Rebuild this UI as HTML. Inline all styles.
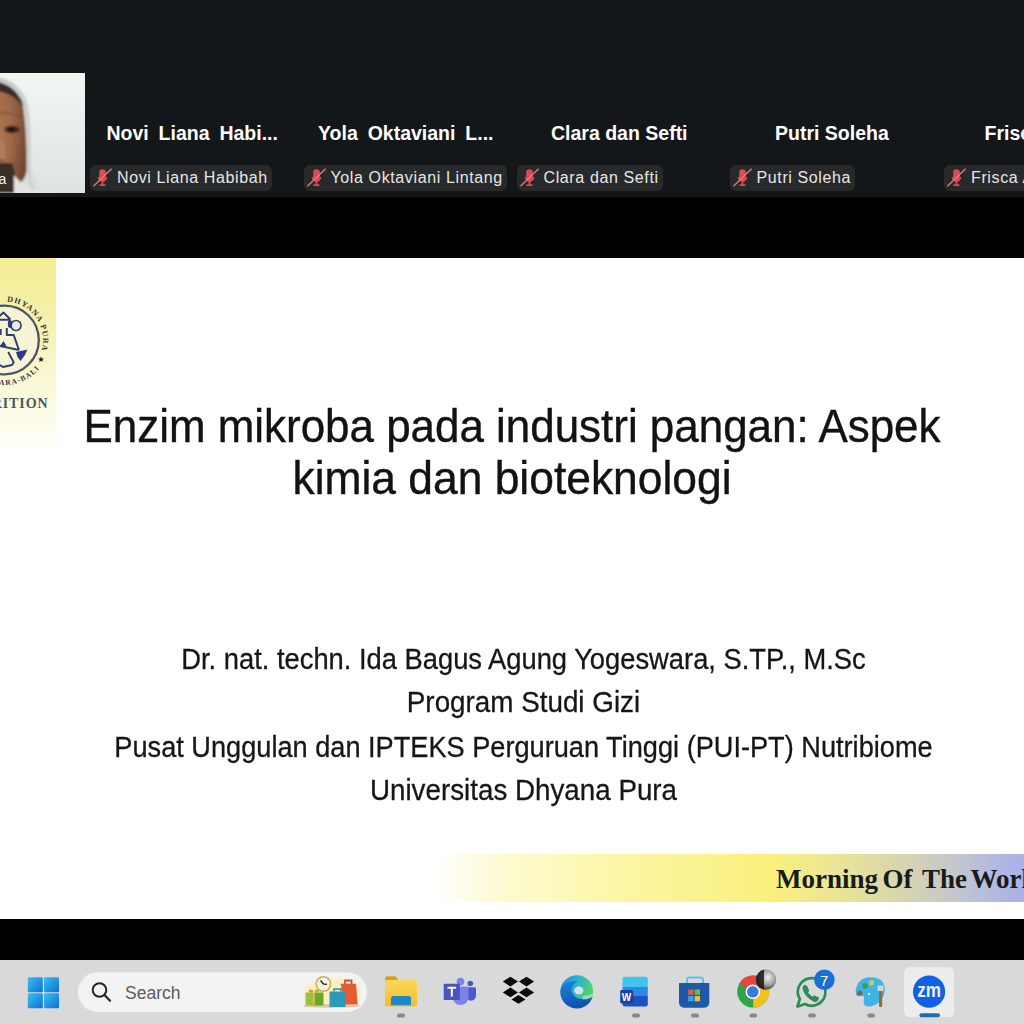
<!DOCTYPE html>
<html><head><meta charset="utf-8">
<style>
*{margin:0;padding:0;box-sizing:border-box}
html,body{width:1024px;height:1024px;overflow:hidden;background:#000;font-family:"Liberation Sans",sans-serif}
.abs{position:absolute}
#top{position:absolute;left:0;top:0;width:1024px;height:197px;background:#14171a}
#gap1{position:absolute;left:0;top:197px;width:1024px;height:61px;background:#000}
#slide{position:absolute;left:0;top:258px;width:1024px;height:661px;background:#fff;overflow:hidden}
#gap2{position:absolute;left:0;top:919px;width:1024px;height:41px;background:#000}
#taskbar{position:absolute;left:0;top:960px;width:1024px;height:64px;background:#d9d9d9}
.name{position:absolute;top:122px;color:#fff;font-weight:bold;font-size:19.5px;white-space:nowrap}
.tag{position:absolute;top:164.5px;height:26px;background:#28292b;border-radius:6px;color:#e6e6e6;font-size:16px;letter-spacing:0.62px;white-space:nowrap;padding-left:27px;padding-right:4px;line-height:26px}
.tag svg{position:absolute;left:4px;top:4px}
.title{position:absolute;left:0;width:1024px;text-align:center;font-size:46px;color:#121212;-webkit-text-stroke:0.4px #121212;white-space:nowrap}
.sub{position:absolute;left:0;width:1047px;text-align:center;font-size:29px;line-height:29px;color:#161616;-webkit-text-stroke:0.3px #161616;white-space:nowrap}
.mw{position:absolute;top:606px;font-family:'Liberation Serif',serif;font-weight:bold;font-size:27px;line-height:30px;color:#1a1a1a;white-space:nowrap}
</style></head><body>
<div id="top"></div>
<div id="video" class="abs" style="left:0;top:73px;width:85px;height:120px;background:linear-gradient(to bottom,#f2f6f3,#e6ebea 60%,#dde2e3);overflow:hidden">
<svg width="85" height="120" viewBox="0 0 85 120" style="position:absolute;left:0;top:0">
<defs><radialGradient id="sk" cx="0.1" cy="0.4" r="0.95"><stop offset="0" stop-color="#b47a54"/><stop offset="0.55" stop-color="#9e6646"/><stop offset="1" stop-color="#6e4430"/></radialGradient>
<linearGradient id="hj" x1="0" y1="0" x2="1" y2="0"><stop offset="0" stop-color="#cacaca"/><stop offset="1" stop-color="#e4e6e6"/></linearGradient>
<filter id="fb" x="-20%" y="-20%" width="140%" height="140%"><feGaussianBlur stdDeviation="0.9"/></filter></defs>
<g filter="url(#fb)">
<path d="M-10 3 C6 3 22 12 28 30 C32 48 31 72 32 96 C34 108 42 114 52 124 L-10 124 Z" fill="url(#hj)"/>
<path d="M-10 5 C8 6 20 14 25 30 C29 47 29 72 29 96 C29 108 31 115 36 122" fill="none" stroke="#c2c2c2" stroke-width="1.4"/>
<path d="M-10 13 C10 15 19 22 23 34 C26 52 27 80 26.5 98 C25.5 106 21 110 15 114 L-10 114 Z" fill="url(#sk)"/>
<path d="M-10 8 C6 9 15 15 22 28 L23.5 34 C17 25 9 19 -10 17 Z" fill="#3a2a26"/>
<path d="M-10 41 C2 39 12 40 21 44" fill="none" stroke="#7a4c38" stroke-width="2.6" opacity="0.55"/>
<ellipse cx="12" cy="56.5" rx="7.8" ry="3.8" fill="#4a2e26"/>
<ellipse cx="11.5" cy="56.5" rx="3.8" ry="2.8" fill="#24160f"/>
<path d="M-10 66 L3 68 C6 74 7 82 5 88 L-10 88 Z" fill="#c49070" opacity="0.45"/>
<path d="M-10 84 C-2 86 3 86 5 88 L-10 90 Z" fill="#6a4030" opacity="0.7"/>
<path d="M-10 90 L12 90 C16 98 16 110 14 120 L-10 120 Z" fill="#3a2e2b"/>
<path d="M14 102 C20 110 30 116 50 124 L14 124 Z" fill="#e2e2e2"/>
</g>
<text x="-1.5" y="110.5" font-family="Liberation Sans" font-size="14" fill="#f0f0f0">a</text>
</svg></div>
<div class="name" style="left:106.4px;word-spacing:4.5px;">Novi Liana Habi...</div>
<div class="tag" style="left:90px"><svg width="26" height="26" viewBox="0 0 26 26" style="position:absolute;left:0;top:0"><rect x="9.2" y="4.3" width="6.6" height="11" rx="3.3" fill="#d84c58"/><path d="M8.6 12a3.9 3.9 0 0 0 7.8 0" fill="none" stroke="#d84c58" stroke-width="1.8"/><path d="M12.5 16v3.5M9.5 20.2h6" stroke="#d84c58" stroke-width="1.8"/><path d="M3.4 21.3L21.6 3.7" stroke="#e87880" stroke-width="1.3"/></svg>Novi Liana Habibah</div>
<div class="name" style="left:318px;word-spacing:4.5px;">Yola Oktaviani L...</div>
<div class="tag" style="left:303.5px"><svg width="26" height="26" viewBox="0 0 26 26" style="position:absolute;left:0;top:0"><rect x="9.2" y="4.3" width="6.6" height="11" rx="3.3" fill="#d84c58"/><path d="M8.6 12a3.9 3.9 0 0 0 7.8 0" fill="none" stroke="#d84c58" stroke-width="1.8"/><path d="M12.5 16v3.5M9.5 20.2h6" stroke="#d84c58" stroke-width="1.8"/><path d="M3.4 21.3L21.6 3.7" stroke="#e87880" stroke-width="1.3"/></svg>Yola Oktaviani Lintang</div>
<div class="name" style="left:551px;">Clara dan Sefti</div>
<div class="tag" style="left:516.5px"><svg width="26" height="26" viewBox="0 0 26 26" style="position:absolute;left:0;top:0"><rect x="9.2" y="4.3" width="6.6" height="11" rx="3.3" fill="#d84c58"/><path d="M8.6 12a3.9 3.9 0 0 0 7.8 0" fill="none" stroke="#d84c58" stroke-width="1.8"/><path d="M12.5 16v3.5M9.5 20.2h6" stroke="#d84c58" stroke-width="1.8"/><path d="M3.4 21.3L21.6 3.7" stroke="#e87880" stroke-width="1.3"/></svg>Clara dan Sefti</div>
<div class="name" style="left:775px;">Putri Soleha</div>
<div class="tag" style="left:729.5px"><svg width="26" height="26" viewBox="0 0 26 26" style="position:absolute;left:0;top:0"><rect x="9.2" y="4.3" width="6.6" height="11" rx="3.3" fill="#d84c58"/><path d="M8.6 12a3.9 3.9 0 0 0 7.8 0" fill="none" stroke="#d84c58" stroke-width="1.8"/><path d="M12.5 16v3.5M9.5 20.2h6" stroke="#d84c58" stroke-width="1.8"/><path d="M3.4 21.3L21.6 3.7" stroke="#e87880" stroke-width="1.3"/></svg>Putri Soleha</div>
<div class="name" style="left:984.5px;word-spacing:4.5px;">Frisca Ayu...</div>
<div class="tag" style="left:944px"><svg width="26" height="26" viewBox="0 0 26 26" style="position:absolute;left:0;top:0"><rect x="9.2" y="4.3" width="6.6" height="11" rx="3.3" fill="#d84c58"/><path d="M8.6 12a3.9 3.9 0 0 0 7.8 0" fill="none" stroke="#d84c58" stroke-width="1.8"/><path d="M12.5 16v3.5M9.5 20.2h6" stroke="#d84c58" stroke-width="1.8"/><path d="M3.4 21.3L21.6 3.7" stroke="#e87880" stroke-width="1.3"/></svg>Frisca Ayu Lestari</div>
<div id="gap1"></div>
<div id="slide">
<div class="abs" style="left:0;top:0;width:56px;height:200px;background:linear-gradient(to bottom,#f3ee96 0%,#f4f0a2 20%,#f7f3ba 42%,#faf8d2 60%,#fdfce8 78%,#ffffff 100%)"></div>
<svg class="abs" style="left:0;top:0" width="56" height="160" viewBox="0 0 56 160">
<defs>
<path id="arcTop" d="M-34 82 A38.5 38.5 0 1 1 43 82 A38.5 38.5 0 0 1 4.5 120.5"/>
<path id="arcBot" d="M-40.5 82 A45 45 0 0 0 49.5 82"/>
</defs>
<circle cx="4.5" cy="82" r="34.3" fill="#f6f4d4" stroke="#4b5662" stroke-width="2.3"/>
<text font-family="Liberation Serif" font-weight="bold" font-size="8" fill="#34383f"><textPath href="#arcTop" startOffset="63" textLength="68" lengthAdjust="spacing">DHYANA PURA</textPath></text>
<polygon points="41.00,98.30 41.76,100.45 44.04,100.51 42.24,101.90 42.88,104.09 41.00,102.80 39.12,104.09 39.76,101.90 37.96,100.51 40.24,100.45" fill="#1a1a1a"/>
<text font-family="Liberation Serif" font-weight="bold" font-size="7.5" fill="#34383f"><textPath href="#arcBot" startOffset="53" textLength="57" lengthAdjust="spacing">UTARA-BALI</textPath></text>
<path d="M-1 58.5 L3.4 54.5 L10.5 61.5 M0 61.7 L10 61.7 M6.8 70 V77 H13.7 L19 92 M0.7 71 V77 M0 88 L19 92 M8.2 94 L13.7 104.4 L12 107 L3 109 L0 107" fill="none" stroke="#34406a" stroke-width="2" stroke-linejoin="round"/>
<circle cx="16" cy="67.5" r="5" fill="#e8eef0" stroke="#3e4850" stroke-width="1.7"/>
<ellipse cx="10" cy="66" rx="2.2" ry="4" fill="#2e3a8a"/>
<path d="M0 88 L3.5 83 L6.5 88 Z M16 94 L23 92.5 L27.3 91.5 L25 97 L20.5 103 L17.5 99 Z" fill="#2e3a8a"/>
<text x="48.5" y="149.8" text-anchor="end" font-family="Liberation Serif" font-weight="bold" font-size="14" fill="#4e5460" letter-spacing="0.9">RITION</text>
</svg>
<div class="title" style="top:144.6px;line-height:46px;transform:scaleX(0.9548)">Enzim mikroba pada industri pangan: Aspek</div>
<div class="title" style="top:197.1px;line-height:46px;transform:scaleX(0.9646)">kimia dan bioteknologi</div>
<div class="sub" style="top:386.6px;transform:scaleX(0.942)">Dr. nat. techn. Ida Bagus Agung Yogeswara, S.TP., M.Sc</div>
<div class="sub" style="top:430.2px;transform:scaleX(0.9588)">Program Studi Gizi</div>
<div class="sub" style="top:474.6px;transform:scaleX(0.9366)">Pusat Unggulan dan IPTEKS Perguruan Tinggi (PUI-PT) Nutribiome</div>
<div class="sub" style="top:518.2px;transform:scaleX(0.9573)">Universitas Dhyana Pura</div>
<div class="abs" style="left:436px;top:595.5px;width:588px;height:48.5px;background:linear-gradient(to right,rgba(253,249,200,0) 0%,#fdfad0 12%,#fcf6a6 31%,#f9f07c 57%,#ebe596 68%,#d6d4b0 80%,#c0c4d4 90%,#a8b0e8 100%)"></div>
<div class="mw" style="left:776px">Morning</div><div class="mw" style="left:882.5px">Of</div><div class="mw" style="left:922px">The</div><div class="mw" style="left:970.5px">World</div>
</div>
<div id="gap2"></div>
<div id="taskbar">
<svg width="1024" height="64" viewBox="0 960 1024 64" style="position:absolute;left:0;top:0">
<defs>
<linearGradient id="win" x1="0" y1="0" x2="1" y2="1"><stop offset="0" stop-color="#3cc0f4"/><stop offset="1" stop-color="#0a6fd2"/></linearGradient>
<linearGradient id="fold" x1="0" y1="0" x2="0" y2="1"><stop offset="0" stop-color="#fbd85a"/><stop offset="1" stop-color="#f2bc2a"/></linearGradient>
<radialGradient id="glow" cx="0.5" cy="0.5" r="0.5"><stop offset="0" stop-color="#fbf2b8"/><stop offset="0.75" stop-color="#f8efc4"/><stop offset="1" stop-color="#f3f3f3" stop-opacity="0"/></radialGradient>
<linearGradient id="edge1" x1="0" y1="0.2" x2="1" y2="0.6"><stop offset="0" stop-color="#1c90e0"/><stop offset="0.45" stop-color="#2cb4d0"/><stop offset="1" stop-color="#5cd85a"/></linearGradient>
<linearGradient id="edge2" x1="0" y1="0" x2="0.3" y2="1"><stop offset="0" stop-color="#1a86dc"/><stop offset="1" stop-color="#1050b0"/></linearGradient>
<radialGradient id="avatar" cx="0.6" cy="0.4" r="0.6"><stop offset="0" stop-color="#f0f0f0"/><stop offset="0.6" stop-color="#a0a0a0"/><stop offset="1" stop-color="#404040"/></radialGradient>
</defs>
<!-- windows -->
<rect x="27.8" y="977.2" width="15" height="15" rx="1.2" fill="url(#win)"/>
<rect x="44" y="977.2" width="15" height="15" rx="1.2" fill="url(#win)"/>
<rect x="27.8" y="993.2" width="15" height="15" rx="1.2" fill="url(#win)"/>
<rect x="44" y="993.2" width="15" height="15" rx="1.2" fill="url(#win)"/>
<!-- search pill -->
<rect x="77.5" y="971.8" width="290" height="40.6" rx="20.3" fill="#f3f3f3" stroke="#d6d6d6" stroke-width="0.8"/>
<circle cx="99.5" cy="990" r="6.8" fill="none" stroke="#262626" stroke-width="2"/>
<path d="M104.5 995 L110 1000.8" stroke="#262626" stroke-width="2.2" stroke-linecap="round"/>
<text x="125" y="999" font-family="Liberation Sans" font-size="17.5" fill="#5c5c5c">Search</text>
<!-- shopping graphic -->
<ellipse cx="332" cy="992" rx="34" ry="16.5" fill="url(#glow)"/>
<path d="M303 1005.5 Q332 1003 360 1005 L358 1007 Q330 1008.5 304 1007 Z" fill="#c8a070" opacity="0.5"/>
<circle cx="323.4" cy="984" r="7.2" fill="#f6f2e2" stroke="#c8b068" stroke-width="1.6"/>
<path d="M323.4 984 L320.5 980.5 M323.4 984 L327 984.3" stroke="#222" stroke-width="1.3"/>
<rect x="305.5" y="992.5" width="9" height="13" fill="#9cc23a"/><rect x="314" y="992.5" width="9.5" height="13" fill="#6aa82c"/>
<rect x="313" y="992.5" width="2" height="13" fill="#e0c048" opacity="0.8"/>
<ellipse cx="311" cy="991" rx="2.5" ry="1.6" fill="#d0a040"/><ellipse cx="317" cy="991" rx="2.5" ry="1.6" fill="#c8b040"/>
<path d="M345 984 v-3.5 h6.5 v3.5" fill="none" stroke="#d84c28" stroke-width="1.8"/>
<path d="M340.5 983.8 L356 983.8 L357.7 1004.5 L345.5 1004.5 Z" fill="#e65c30"/>
<path d="M334 991.5 v-2.5 h7 v2.5" fill="none" stroke="#2a8eb0" stroke-width="1.6"/>
<rect x="329.5" y="991.5" width="16" height="15.5" fill="#2b9ab8"/>
<!-- folder -->
<path d="M385.2 978.5 Q385.2 976.3 387.5 976.3 L395 976.3 L398 979 L398 983.8 L385.2 983.8 Z" fill="#d6a21e"/>
<rect x="385" y="980" width="32" height="26.4" rx="1.5" fill="url(#fold)"/>
<path d="M391 1005.3 L391 998.5 Q391 996 393.5 996 L408.5 996 Q411 996 411 998.5 L411 1005.3 Z" fill="#1a88cc"/>
<!-- teams -->
<circle cx="460.5" cy="981.5" r="3.8" fill="#7b83eb"/>
<circle cx="470.3" cy="983.5" r="2.8" fill="#5059c9"/>
<path d="M465.5 987.2 h9 a1.5 1.5 0 0 1 1.5 1.5 v7 a5 5 0 0 1 -10 0 z" fill="#5059c9"/>
<path d="M453 986.5 h14 a1.5 1.5 0 0 1 1.5 1.5 v9 a8 8 0 0 1 -16 0 z" fill="#7b83eb"/>
<rect x="443.7" y="983.8" width="16.2" height="16.2" rx="1" fill="#4b53bc"/>
<path d="M447.5 987.8 h8.6 M451.8 987.8 v8.6" stroke="#fff" stroke-width="2"/>
<!-- dropbox -->
<g fill="#0a0a0a">
<path d="M510.4 976.8 L518 981.6 L510.4 986.4 L502.8 981.6 Z"/>
<path d="M526.5 976.8 L534.1 981.6 L526.5 986.4 L518.9 981.6 Z"/>
<path d="M510.4 987.6 L518 992.4 L510.4 997.2 L502.8 992.4 Z"/>
<path d="M526.5 987.6 L534.1 992.4 L526.5 997.2 L518.9 992.4 Z"/>
<path d="M518.5 995 L525.5 999.4 L518.5 1003.8 L511.5 999.4 Z"/>
</g>
<!-- edge -->
<circle cx="576.8" cy="991.6" r="16.4" fill="url(#edge1)"/>
<path d="M560.4 991.6 A16.4 16.4 0 0 0 592.6 996.5 Q589 999.5 583 999.3 Q573 998.5 571.5 991 Q571 984 578 981.5 Q568 980 562.5 986 Q560.4 988.5 560.4 991.6 Z" fill="url(#edge2)"/>
<ellipse cx="578.8" cy="990.5" rx="4.6" ry="4" fill="#d4e2e6"/>
<path d="M583 995.5 Q588 995.8 593 994 L592.6 996.5 Q589 999.5 583 999.3 Z" fill="#cfe6dc" opacity="0.6"/>
<!-- word -->
<path d="M625 976.7 h20.3 a2.5 2.5 0 0 1 2.5 2.5 v8 h-25.3 v-8 a2.5 2.5 0 0 1 2.5 -2.5z" fill="#41c3f0"/>
<rect x="622.5" y="987" width="25.3" height="9.2" fill="#2b8ae6"/>
<path d="M622.5 996 h25.3 v8 a2.5 2.5 0 0 1 -2.5 2.5 h-20.3 a2.5 2.5 0 0 1 -2.5 -2.5z" fill="#1a52c6"/>
<rect x="620.2" y="990" width="13" height="13.6" rx="1.5" fill="#1a3fa0"/>
<text x="621.7" y="1001.2" font-family="Liberation Sans" font-weight="bold" font-size="10" fill="#fff">W</text>
<!-- store -->
<path d="M687 983 v-3 a2.5 2.5 0 0 1 2.5 -2.5 h11 a2.5 2.5 0 0 1 2.5 2.5 v3" fill="none" stroke="#5cc0ee" stroke-width="2"/>
<path d="M679 983 h30.3 v19.7 a5 5 0 0 1 -5 5 h-20.3 a5 5 0 0 1 -5 -5z" fill="#1e58a6"/>
<rect x="688.2" y="989.5" width="5.3" height="5.3" fill="#e0603e"/>
<rect x="694.7" y="989.5" width="5.3" height="5.3" fill="#78b834"/>
<rect x="688.2" y="996" width="5.3" height="5.3" fill="#36a8e6"/>
<rect x="694.7" y="996" width="5.3" height="5.3" fill="#eec232"/>
<!-- chrome -->
<circle cx="753.2" cy="991.6" r="16" fill="#2ea44f"/>
<path d="M753.2 991.6 L739.3 983.6 A16 16 0 0 1 767.1 983.6 Z" fill="#e8453c"/>
<path d="M753.2 991.6 L767.1 983.6 A16 16 0 0 1 753.2 1007.6 Z" fill="#f4c020"/>
<circle cx="752.8" cy="991.8" r="7.3" fill="#fff"/>
<circle cx="752.8" cy="991.8" r="5.8" fill="#3a78e0"/>
<circle cx="766" cy="979.6" r="10.2" fill="url(#avatar)"/>
<path d="M756 979.6 a10.2 10.2 0 0 1 8 -10 v20 a10.2 10.2 0 0 1 -8 -10z" fill="#1a1a1a" opacity="0.85"/>
<!-- whatsapp -->
<path d="M797.5 1006.5 L799.8 999 A13.8 13.8 0 1 1 805 1004 Z" fill="none" stroke="#2e8c56" stroke-width="2.7" stroke-linejoin="round"/>
<path d="M804.5 985.5 q-1.5 1 -1 3.5 q2 6 8.5 9.5 q2.5 1 3.5 -0.5 l0.8 -1.8 l-3.5 -1.8 l-1.2 1.3 q-3 -1.5 -4.8 -4.5 l1.2 -1.3 l-1.6 -3.6 z" fill="#2e8c56" stroke="#2e8c56" stroke-width="1" transform="translate(804.5 985.5) scale(1.18) translate(-804.5 -985.5)"/>
<circle cx="824.4" cy="979.7" r="10.3" fill="#1a6fd6"/>
<text x="824.2" y="985.5" text-anchor="middle" font-family="Liberation Sans" font-size="15" fill="#fff">7</text>
<!-- paint -->
<path d="M870 977.2 C882 977 886 984 884.5 992 C883 1000 877 1006.5 868 1006.5 C864 1006.5 863 1002 864 999 C865 996 862 995 859 996 C856 997 855.5 993 855.8 990 C857 982 862 977.3 870 977.2 Z" fill="#3eb4e6"/>
<circle cx="865" cy="985.8" r="2.8" fill="#3a9e44"/>
<circle cx="871.5" cy="982.8" r="2.6" fill="#e2c440"/>
<circle cx="859.8" cy="993" r="2.6" fill="#7e6250"/>
<circle cx="869" cy="994" r="1.2" fill="#d8f0f8"/>
<rect x="879" y="990" width="3.2" height="17" rx="1" fill="#9a6a3a"/>
<rect x="877.5" y="985.5" width="6" height="5.5" rx="1" fill="#d8d4cc"/>
<!-- zoom -->
<rect x="904.2" y="967.3" width="49.8" height="49.8" rx="5" fill="#ededed"/>
<circle cx="929.1" cy="991.6" r="16.1" fill="#1260e8"/>
<text x="917.3" y="996.6" font-family="Liberation Sans" font-weight="bold" font-size="20.5" fill="#eef4ff" textLength="23.8" lengthAdjust="spacingAndGlyphs">zm</text>
<rect x="919.4" y="1013.2" width="20.6" height="4" rx="2" fill="#1d6cb4"/>
<!-- dots -->
<g fill="#888">
<rect x="397" y="1013.5" width="8" height="4" rx="2"/>
<rect x="632" y="1013.5" width="8" height="4" rx="2"/>
<rect x="691" y="1013.5" width="8" height="4" rx="2"/>
<rect x="749.6" y="1013.5" width="7.6" height="4" rx="2"/>
<rect x="808.2" y="1013.5" width="7.7" height="4" rx="2"/>
<rect x="867.3" y="1013.5" width="7.6" height="4" rx="2"/>
</g>
</svg>
</div>
</body></html>
